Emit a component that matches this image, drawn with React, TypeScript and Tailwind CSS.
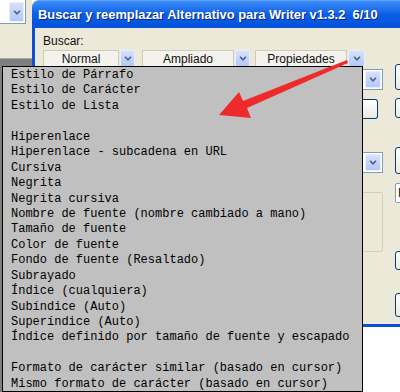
import React from "react";

const items = [
  "Estilo de Párrafo",
  "Estilo de Carácter",
  "Estilo de Lista",
  "",
  "Hiperenlace",
  "Hiperenlace - subcadena en URL",
  "Cursiva",
  "Negrita",
  "Negrita cursiva",
  "Nombre de fuente (nombre cambiado a mano)",
  "Tamaño de fuente",
  "Color de fuente",
  "Fondo de fuente (Resaltado)",
  "Subrayado",
  "Índice (cualquiera)",
  "Subíndice (Auto)",
  "Superíndice (Auto)",
  "Índice definido por tamaño de fuente y escapado",
  "",
  "Formato de carácter similar (basado en cursor)",
  "Mismo formato de carácter (basado en cursor)",
];

function Chevron() {
  return (
    <svg width="8" height="5" viewBox="0 0 8 5">
      <path d="M1 0.8 L4 3.8 L7 0.8" fill="none" stroke="#4d6185" strokeWidth="1.6" />
    </svg>
  );
}

function ArrowBtn({ w = 15, h = 17 }: { w?: number; h?: number }) {
  return (
    <div
      className="flex items-center justify-center rounded-[2px] border border-[#e8eefc] bg-gradient-to-b from-[#d6e1fc] to-[#b4c8f6] shrink-0"
      style={{ width: w, height: h }}
    >
      <Chevron />
    </div>
  );
}

function FlatBtn({ label, w }: { label: string; w: number }) {
  return (
    <div
      className="h-[17px] flex items-center justify-center border border-[#cfcbbb] border-b-0 bg-[#f3f2ec] text-[12px] text-[#111] shrink-0"
      style={{ width: w, fontFamily: '"Liberation Sans", Arial, sans-serif' }}
    >
      {label}
    </div>
  );
}

function XpBtn({ h, mt }: { h: number; mt: number }) {
  return (
    <div
      className="w-[40px] rounded-[3px] border border-[#003c74] bg-gradient-to-b from-white to-[#ece9e0] shrink-0"
      style={{ height: h, marginTop: mt }}
    />
  );
}

export default function App() {
  return (
    <div className="relative w-[400px] h-[392px] overflow-hidden bg-white flex">
      {/* left background window */}
      <div className="w-[32px] shrink-0 flex flex-col bg-[#ece9d8]">
        <div className="h-[24px] flex">
          <div className="w-[26px] h-[24px] bg-white border-r border-b border-[#7f9db9] flex items-start justify-end pt-[2px] pr-[1px]">
            <ArrowBtn w={15} h={20} />
          </div>
        </div>
        <div className="h-[34px]" />
        <div className="flex-1 bg-[#7f7f7f] border-t border-[#a9a9a9]" />
      </div>

      {/* main window */}
      <div className="w-[368px] shrink-0 flex flex-col">
        <div className="h-[327px] flex flex-col overflow-hidden">
          {/* title bar */}
          <div className="h-[28px] shrink-0 rounded-tl-[7px] bg-gradient-to-b from-[#3d8cf7] via-[#0a5ee6] to-[#0552d8] flex items-center pl-[6px] border-t border-[#5aa2ff]">
            <span
              className="text-white font-bold text-[12.9px] whitespace-nowrap [text-shadow:1px_1px_0_#0a2a80]"
              style={{ fontFamily: '"Liberation Sans", Arial, sans-serif' }}
            >
              Buscar y reemplazar Alternativo para Writer v1.3.2&nbsp;&nbsp;6/10
            </span>
          </div>
          {/* body */}
          <div className="flex-1 flex bg-[#ece9d8] border-l-[3px] border-b-[3px] border-[#0b4fd6]">
            <div className="w-[348px] shrink-0 flex flex-col pl-[8px]">
              <div
                className="h-[14px] mt-[6px] text-[12px] leading-[14px] text-[#111]"
                style={{ fontFamily: '"Liberation Sans", Arial, sans-serif' }}
              >
                Buscar:
              </div>
              <div className="mt-[2px] flex items-start">
                <FlatBtn label="Normal" w={76} />
                <div className="ml-[1px]"><ArrowBtn w={15} h={17} /></div>
                <div className="ml-[7px]"><FlatBtn label="Ampliado" w={92} /></div>
                <div className="ml-[1px]"><ArrowBtn w={15} h={17} /></div>
                <div className="ml-[5px]"><FlatBtn label="Propiedades" w={92} /></div>
                <div className="ml-[1px]"><ArrowBtn w={17} h={17} /></div>
              </div>
              <div className="flex">
                <div className="w-[317px] shrink-0" />
                <div className="w-[23px] shrink-0 flex flex-col">
                  <div className="mt-[2px] h-[21px] bg-white border border-l-0 border-[#7f9db9] flex items-center justify-end pr-[1px]">
                    <ArrowBtn w={16} h={17} />
                  </div>
                  <div className="mt-[9px] w-[18px] h-[20px] rounded-r-[3px] border border-l-0 border-[#003c74] bg-gradient-to-b from-white to-[#ece9e0]" />
                  <div className="mt-[33px] h-[21px] bg-white border border-l-0 border-[#7f9db9] flex items-center justify-end pr-[1px]">
                    <ArrowBtn w={16} h={17} />
                  </div>
                  <div className="mt-[19px] h-[60px] rounded-r-[3px] border border-l-0 border-[#d0d0bf]" />
                </div>
              </div>
            </div>
            <div className="w-[12px] shrink-0" />
            <div className="w-[40px] shrink-0 flex flex-col">
              <XpBtn h={26} mt={36} />
              <XpBtn h={20} mt={8} />
              <XpBtn h={27} mt={29} />
              <div
                className="mt-[9px] h-[20px] w-[40px] rounded-[2px] border border-[#7f9db9] bg-white text-[12px] leading-[18px] pl-[2px] text-[#111]"
                style={{ fontFamily: '"Liberation Sans", Arial, sans-serif' }}
              >
                F
              </div>
              <XpBtn h={19} mt={48} />
              <XpBtn h={24} mt={23} />
            </div>
          </div>
        </div>
        <div className="flex-1 bg-white" />
      </div>

      {/* dropdown list */}
      <div
        className="absolute left-[2px] top-[66px] w-[361px] h-[326px] bg-[#c0c0c0] border border-black pl-[8px] pt-[1px] text-[12px] leading-[15.45px] text-black"
        style={{ fontFamily: '"Liberation Mono", "Courier New", monospace' }}
      >
        {items.map((t, i) => (
          <div key={i} className="h-[15.45px] whitespace-pre">
            {t || " "}
          </div>
        ))}
      </div>

      {/* red arrow */}
      <svg className="absolute left-0 top-0" width="400" height="392" viewBox="0 0 400 392">
        <polygon
          points="347,60 348,63 247,108 251,118 219,115 239,92 243,101"
          fill="#ef2a2a"
        />
      </svg>
    </div>
  );
}
